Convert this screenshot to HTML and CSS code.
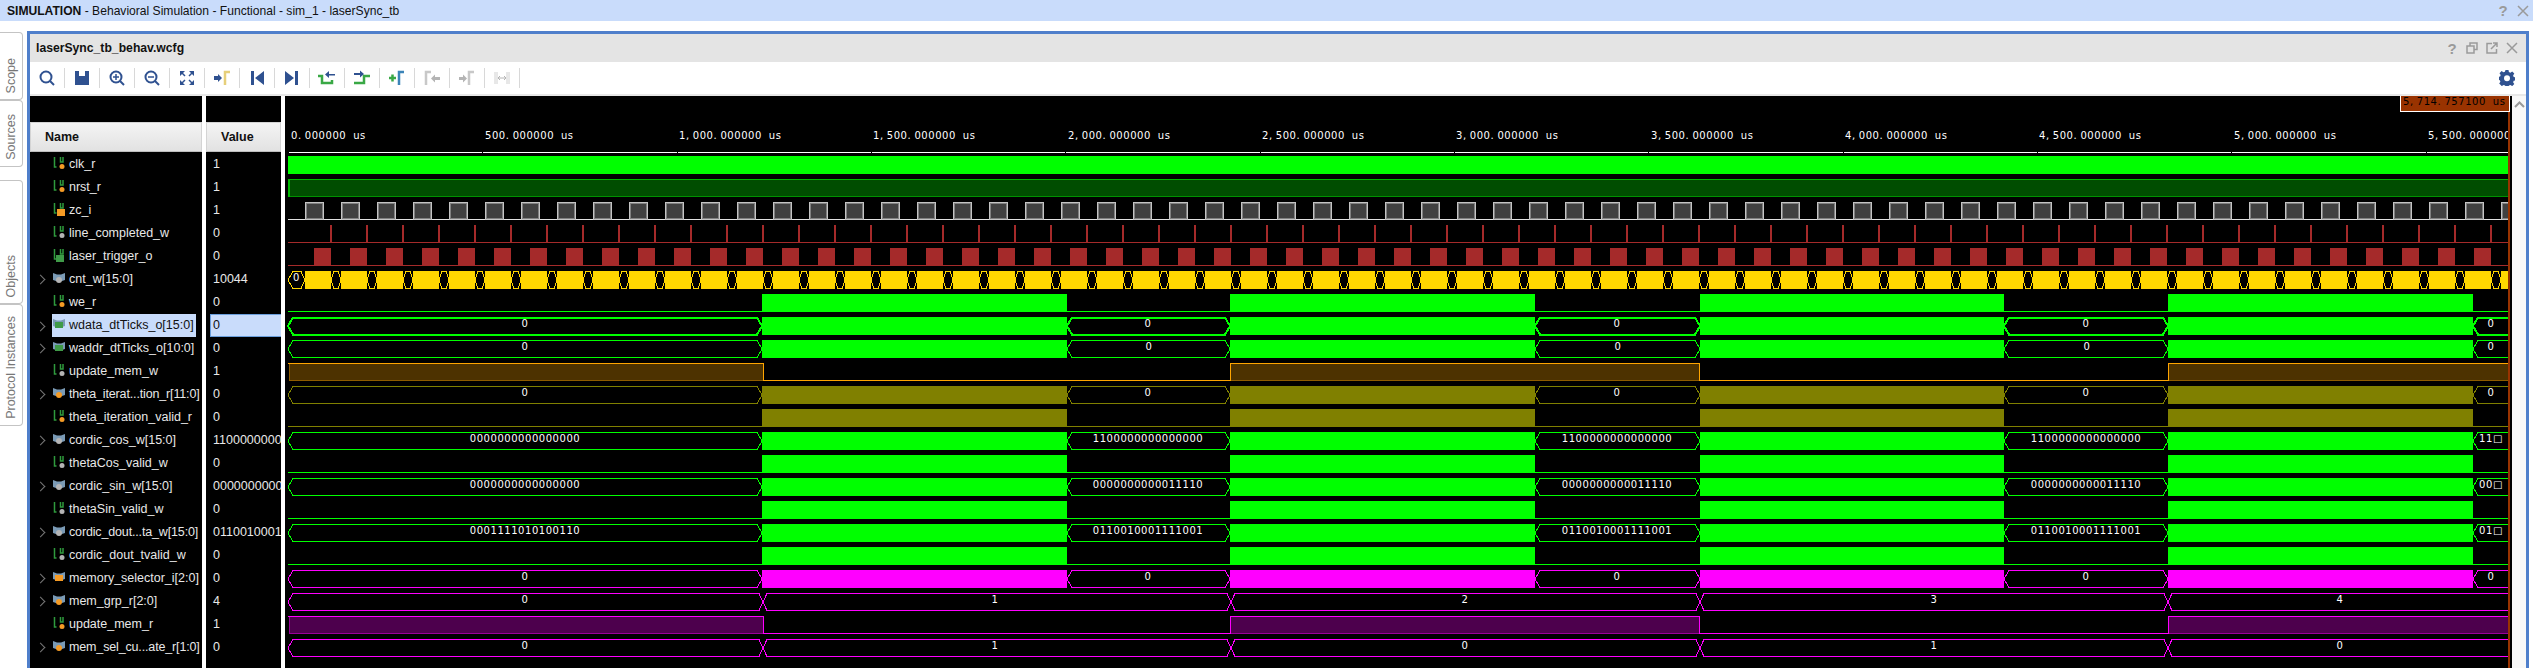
FILE: index.html
```html
<!DOCTYPE html>
<html lang="en">
<head>
<meta charset="utf-8">
<title>SIMULATION - laserSync_tb</title>
<link rel="stylesheet" href="styles.css">
</head>
<body>
<svg class="defs" width="0" height="0">
  <defs>
    <symbol id="s-line" viewBox="0 0 14 16"><path class="sl" d="M2.5 1v10h2M8.5 1v5h2.5V1"/></symbol>
    <symbol id="s-bus" viewBox="0 0 14 16"><path class="sb" d="M1 2l4 1.5h4L13 2v7l-3 1H4l-3-1z"/></symbol>
  </defs>
</svg>

<header class="titlebar">
  <span class="title"><b>SIMULATION</b> - Behavioral Simulation - Functional - sim_1 - laserSync_tb</span>
  <span class="top-controls">
    <span class="q">?</span>
    <svg class="ctl" width="12" height="12" viewBox="0 0 12 12"><path d="M1 1l10 10M11 1L1 11"/></svg>
  </span>
</header>

<div class="workspace">
  <nav class="sidetabs">
    <div class="tab tab-scope"><span>Scope</span></div>
    <div class="tab tab-sources"><span>Sources</span></div>
    <div class="tab tab-objects"><span>Objects</span></div>
    <div class="tab tab-proto"><span>Protocol Instances</span></div>
  </nav>

  <main class="window">
    <div class="win-head">
      <span class="win-title">laserSync_tb_behav.wcfg</span>
      <span class="win-controls">
        <span class="q">?</span>
        <svg class="ctl" width="12" height="12" viewBox="0 0 12 12"><path d="M4 3.5V1h7v6.5H8M1 4h7v7H1z"/></svg>
        <svg class="ctl" width="12" height="12" viewBox="0 0 12 12"><path d="M6 1.500H1V11h9.500V7"/><path d="M5 7l6-6M7 1h4v4"/></svg>
        <svg class="ctl" width="12" height="12" viewBox="0 0 12 12"><path d="M1 1l10 10M11 1L1 11"/></svg>
      </span>
    </div>

    <div class="toolbar">
      <span class="tool"><svg viewBox="0 0 20 20"><circle class="i-s" cx="9" cy="9" r="5.500"/><path class="i-s" d="M13 13l4 4"/></svg></span>
      <span class="tool"><svg viewBox="0 0 20 20"><path class="i-f" fill-rule="evenodd" d="M3 3h14v14H3zM7 3v5h6V3z"/></svg></span>
      <span class="tool"><svg viewBox="0 0 20 20"><circle class="i-s" cx="9" cy="9" r="5.500"/><path class="i-s" d="M13 13l4 4"/><path class="i-t" d="M6 9h6M9 6v6"/></svg></span>
      <span class="tool"><svg viewBox="0 0 20 20"><circle class="i-s" cx="9" cy="9" r="5.500"/><path class="i-s" d="M13 13l4 4"/><path class="i-t" d="M6 9h6"/></svg></span>
      <span class="tool"><svg viewBox="0 0 20 20"><path class="i-f" d="M3 3h5L3 8zM17 3v5l-5-5zM3 17v-5l5 5zM17 17h-5l5-5z"/><path class="i-t" d="M4 4l4 4M16 4l-4 4M4 16l4-4M16 16l-4-4"/></svg></span>
      <span class="tool"><svg viewBox="0 0 20 20"><path class="i-f" d="M2 8h4V6l4 4-4 4v-2H2z"/><path class="i-y" d="M13 17V4h5"/></svg></span>
      <span class="tool"><svg viewBox="0 0 20 20"><path class="i-f" d="M4 3h3v14H4zM17 3v14L8 10z"/></svg></span>
      <span class="tool"><svg viewBox="0 0 20 20"><path class="i-f" d="M16 3h-3v14h3zM3 3v14l9-7z"/></svg></span>
      <span class="tool"><svg viewBox="0 0 20 20"><path class="i-g" d="M1 8h4v7h10v-3"/><path class="i-f" d="M18 6h-6V3L8 6.500l4 3.500V7.500h6z"/></svg></span>
      <span class="tool"><svg viewBox="0 0 20 20"><path class="i-g" d="M2 15h10V8h6"/><path class="i-f" d="M2 5h6V2.500l4 3.500-4 3.500V7H2z"/></svg></span>
      <span class="tool"><svg viewBox="0 0 20 20"><path class="i-g" d="M2 10h7M5.500 6.500v7"/><path class="i-b" d="M12 17V4h5"/></svg></span>
      <span class="tool"><svg viewBox="0 0 20 20"><path class="i-m" d="M4 17V4h5"/><path class="i-n" d="M18 9h-5V6.500L9 10.500l4 4V12h5z"/></svg></span>
      <span class="tool"><svg viewBox="0 0 20 20"><path class="i-n" d="M2 9h4V6.500l4 4-4 4V12H2z"/><path class="i-m" d="M12 17V4h5"/></svg></span>
      <span class="tool"><svg viewBox="0 0 20 20"><path class="i-m2" d="M3 4v12M17 4v12M5 4v12M15 4v12"/><path class="i-th" d="M6 10h8M6 10l2-2M6 10l2 2M14 10l-2-2M14 10l-2 2"/></svg></span>
      <span class="gear"><svg width="16" height="16" viewBox="0 0 16 16"><path class="i-gear" fill-rule="evenodd" d="M6.500 0h3l.4 2.100 1.500.6 1.800-1.200 2.100 2.100-1.200 1.800.6 1.500 2.100.4v3l-2.100.4-.6 1.500 1.200 1.800-2.100 2.100-1.800-1.200-1.500.6-.4 2.100h-3l-.4-2.100-1.500-.6-1.800 1.200L.2 13.600l1.200-1.800-.6-1.500L-1 9.900v-3l2.100-.4.6-1.500L.5 3.200 2.600 1.100l1.800 1.200 1.500-.6zM8 5.200a3 3 0 1 0 0 6 3 3 0 0 0 0-6z"/></svg></span>
    </div>

    <div class="viewer">
      <section class="col col-names">
        <div class="col-spacer"></div>
        <div class="col-head">Name</div>
        <ul class="rows">
          <li class="row"><i class="chev"></i><svg class="sig"><use href="#s-line"/><circle class="dot reg" cx="10" cy="10.500" r="2.500"/></svg>clk_r</li>
          <li class="row"><i class="chev"></i><svg class="sig"><use href="#s-line"/><circle class="dot reg" cx="10" cy="10.500" r="2.500"/></svg>nrst_r</li>
          <li class="row"><i class="chev"></i><svg class="sig"><use href="#s-line"/><rect class="dot reg" x="5" y="7" width="8" height="7"/></svg>zc_i</li>
          <li class="row"><i class="chev"></i><svg class="sig"><use href="#s-line"/><circle class="dot wire" cx="10" cy="10.500" r="2.500"/></svg>line_completed_w</li>
          <li class="row"><i class="chev"></i><svg class="sig"><use href="#s-line"/><rect class="dot out" x="4" y="7" width="8" height="7"/></svg>laser_trigger_o</li>
          <li class="row"><i class="chev on"></i><svg class="sig"><use href="#s-bus"/><circle class="dot wire" cx="7" cy="9" r="3"/></svg>cnt_w[15:0]</li>
          <li class="row"><i class="chev"></i><svg class="sig"><use href="#s-line"/><circle class="dot reg" cx="10" cy="10.500" r="2.500"/></svg>we_r</li>
          <li class="row selected"><i class="chev on"></i><span class="sel-label"><svg class="sig"><use href="#s-bus"/><rect class="dot out" x="3" y="5" width="8" height="6"/></svg>wdata_dtTicks_o[15:0]</span></li>
          <li class="row"><i class="chev on"></i><svg class="sig"><use href="#s-bus"/><rect class="dot out" x="3" y="5" width="8" height="6"/></svg>waddr_dtTicks_o[10:0]</li>
          <li class="row"><i class="chev"></i><svg class="sig"><use href="#s-line"/><circle class="dot wire" cx="10" cy="10.500" r="2.500"/></svg>update_mem_w</li>
          <li class="row tight"><i class="chev on"></i><svg class="sig"><use href="#s-bus"/><circle class="dot reg" cx="7" cy="9" r="3"/></svg>theta_iterat...tion_r[11:0]</li>
          <li class="row"><i class="chev"></i><svg class="sig"><use href="#s-line"/><circle class="dot reg" cx="10" cy="10.500" r="2.500"/></svg>theta_iteration_valid_r</li>
          <li class="row"><i class="chev on"></i><svg class="sig"><use href="#s-bus"/><circle class="dot wire" cx="7" cy="9" r="3"/></svg>cordic_cos_w[15:0]</li>
          <li class="row"><i class="chev"></i><svg class="sig"><use href="#s-line"/><circle class="dot wire" cx="10" cy="10.500" r="2.500"/></svg>thetaCos_valid_w</li>
          <li class="row"><i class="chev on"></i><svg class="sig"><use href="#s-bus"/><circle class="dot wire" cx="7" cy="9" r="3"/></svg>cordic_sin_w[15:0]</li>
          <li class="row"><i class="chev"></i><svg class="sig"><use href="#s-line"/><circle class="dot wire" cx="10" cy="10.500" r="2.500"/></svg>thetaSin_valid_w</li>
          <li class="row tight"><i class="chev on"></i><svg class="sig"><use href="#s-bus"/><circle class="dot wire" cx="7" cy="9" r="3"/></svg>cordic_dout...ta_w[15:0]</li>
          <li class="row"><i class="chev"></i><svg class="sig"><use href="#s-line"/><circle class="dot wire" cx="10" cy="10.500" r="2.500"/></svg>cordic_dout_tvalid_w</li>
          <li class="row"><i class="chev on"></i><svg class="sig"><use href="#s-bus"/><rect class="dot reg" x="3" y="5" width="8" height="6"/></svg>memory_selector_i[2:0]</li>
          <li class="row"><i class="chev on"></i><svg class="sig"><use href="#s-bus"/><circle class="dot reg" cx="7" cy="9" r="3"/></svg>mem_grp_r[2:0]</li>
          <li class="row"><i class="chev"></i><svg class="sig"><use href="#s-line"/><circle class="dot reg" cx="10" cy="10.500" r="2.500"/></svg>update_mem_r</li>
          <li class="row tight"><i class="chev on"></i><svg class="sig"><use href="#s-bus"/><circle class="dot reg" cx="7" cy="9" r="3"/></svg>mem_sel_cu...ate_r[1:0]</li>
        </ul>
      </section>

      <section class="col col-values">
        <div class="col-spacer"></div>
        <div class="col-head">Value</div>
        <ul class="rows">
          <li class="val">1</li><li class="val">1</li><li class="val">1</li><li class="val">0</li><li class="val">0</li>
          <li class="val">10044</li><li class="val">0</li><li class="val val-sel">0</li><li class="val">0</li><li class="val">1</li>
          <li class="val">0</li><li class="val">0</li><li class="val">1100000000000000</li><li class="val">0</li>
          <li class="val">0000000000011110</li><li class="val">0</li><li class="val">0110010001111001</li><li class="val">0</li>
          <li class="val">0</li><li class="val">4</li><li class="val">1</li><li class="val">0</li>
        </ul>
      </section>

      <section class="wave-panel">
        <svg class="waves" width="2227" height="572" viewBox="285 96 2227 572">
          <defs>
            <g id="t1">
              <rect class="zc-outer" x="305.500" y="202.500" width="18" height="17"/>
              <rect class="zc-inner" x="306.500" y="203.500" width="16" height="15"/>
              <rect class="zc-low" x="324" y="219" width="17" height="1"/>
              <rect class="red" x="330" y="225" width="2" height="18"/>
              <rect class="red" x="314" y="248" width="17" height="18"/>
              <rect class="yel" x="305" y="271" width="26" height="18"/>
              <path class="yel-line" d="M331 280L334 271.500H338L341 280L338 288.500H334Z"/>
            </g>
            <g id="t2"><use href="#t1"/><use href="#t1" x="36"/></g>
            <g id="t4"><use href="#t2"/><use href="#t2" x="72"/></g>
            <g id="t8"><use href="#t4"/><use href="#t4" x="144"/></g>
            <g id="t16"><use href="#t8"/><use href="#t8" x="288"/></g>
            <g id="t32"><use href="#t16"/><use href="#t16" x="576"/></g>
            <g id="t64"><use href="#t32"/><use href="#t32" x="1152"/></g>
            <g id="pulses">
              <rect x="762" width="305" height="18"/><rect x="1230" width="305" height="18"/>
              <rect x="1700" width="304" height="18"/><rect x="2168" width="305" height="18"/>
            </g>
            <g id="gaps">
              <path d="M288 9L293 .5H757L762 9L757 17.500H293Z"/>
              <path d="M1067 9L1072 .5H1225L1230 9L1225 17.500H1072Z"/>
              <path d="M1535 9L1540 .5H1695L1700 9L1695 17.500H1540Z"/>
              <path d="M2004 9L2009 .5H2163L2168 9L2163 17.500H2009Z"/>
              <path d="M2520 .5H2478L2473 9L2478 17.500H2520"/>
            </g>
            <path id="xover" d="M288 9L293 .5H759L767 17.500H1227L1235 .5H1696L1704 17.500H2164L2172 .5H2520M288 9L293 17.500H759L767 .5H1227L1235 17.500H1696L1704 .5H2164L2172 17.500H2520"/>
            <g id="lowpulses">
              <rect class="low" x="288" y="17" width="2230" height="1"/>
              <use href="#pulses"/>
            </g>
          </defs>

          <g class="ruler-text">
            <text x="291" y="139">0<tspan class="p">.</tspan>000000<tspan class="p"> </tspan>us</text>
            <text x="485" y="139">500<tspan class="p">.</tspan>000000<tspan class="p"> </tspan>us</text>
            <text x="679" y="139">1<tspan class="p">,</tspan>000<tspan class="p">.</tspan>000000<tspan class="p"> </tspan>us</text>
            <text x="873" y="139">1<tspan class="p">,</tspan>500<tspan class="p">.</tspan>000000<tspan class="p"> </tspan>us</text>
            <text x="1068" y="139">2<tspan class="p">,</tspan>000<tspan class="p">.</tspan>000000<tspan class="p"> </tspan>us</text>
            <text x="1262" y="139">2<tspan class="p">,</tspan>500<tspan class="p">.</tspan>000000<tspan class="p"> </tspan>us</text>
            <text x="1456" y="139">3<tspan class="p">,</tspan>000<tspan class="p">.</tspan>000000<tspan class="p"> </tspan>us</text>
            <text x="1651" y="139">3<tspan class="p">,</tspan>500<tspan class="p">.</tspan>000000<tspan class="p"> </tspan>us</text>
            <text x="1845" y="139">4<tspan class="p">,</tspan>000<tspan class="p">.</tspan>000000<tspan class="p"> </tspan>us</text>
            <text x="2039" y="139">4<tspan class="p">,</tspan>500<tspan class="p">.</tspan>000000<tspan class="p"> </tspan>us</text>
            <text x="2234" y="139">5<tspan class="p">,</tspan>000<tspan class="p">.</tspan>000000<tspan class="p"> </tspan>us</text>
            <text x="2428" y="139">5<tspan class="p">,</tspan>500<tspan class="p">.</tspan>000000<tspan class="p"> </tspan>us</text>
          </g>
          <rect class="ruler-line" x="289" y="152" width="2219" height="1"/>
          <path class="ruler-nicks" d="M482 152.500h1M677 152.500h1M871 152.500h1M1065 152.500h1M1260 152.500h1M1454 152.500h1M1648 152.500h1M1843 152.500h1M2037 152.500h1M2231 152.500h1M2426 152.500h1"/>

          <rect class="bar-green" x="288" y="156" width="2220" height="18"/>

          <g transform="translate(0 179)">
            <rect class="nrst-fill" x="288" y="0" width="2220" height="18"/>
            <rect class="nrst-bot" x="288" y="17" width="2220" height="1"/>
            <path class="nrst-top" d="M288 .5H2508M288.500 0V18M289.500 0V18"/>
          </g>

          <rect class="zc-low" x="288" y="219" width="17" height="1"/>
          <rect class="red" x="288" y="242" width="2220" height="1"/>
          <rect class="red" x="288" y="265" width="2220" height="1"/>
          <path class="yel-line" d="M288 280L293 271.500H301L305 280L301 288.500H293Z"/>
          <text class="bus-text" x="296.500" y="281">0</text>
          <use href="#t64"/>

          <g class="c-green" transform="translate(0 294)"><use href="#lowpulses"/></g>

          <g class="c-green thick" transform="translate(0 317)">
            <use href="#gaps"/><use href="#pulses"/>
            <text class="bus-text" x="525" y="10">0</text><text class="bus-text" x="1148" y="10">0</text>
            <text class="bus-text" x="1617" y="10">0</text><text class="bus-text" x="2086" y="10">0</text>
            <text class="bus-text" x="2491" y="10">0</text>
          </g>
          <g class="c-green" transform="translate(0 340)">
            <use href="#gaps"/><use href="#pulses"/>
            <text class="bus-text" x="525" y="10">0</text><text class="bus-text" x="1149" y="10">0</text>
            <text class="bus-text" x="1618" y="10">0</text><text class="bus-text" x="2087" y="10">0</text>
            <text class="bus-text" x="2491" y="10">0</text>
          </g>

          <g transform="translate(0 363)">
            <path class="o-fill" d="M289 1H763V17H289zM1231 1H1700V17H1231zM2168 1H2508V17H2168z"/>
            <path class="o-dark" d="M289.500 1V17.500H763M1231 17.500H1700M2169 17.500H2508"/>
            <path class="o-line" d="M288 .5H763.500V17.500H1230.500V.5H1699.500V17.500H2168.500V.5H2508"/>
          </g>

          <g class="c-olive" transform="translate(0 386)">
            <use href="#gaps"/><use href="#pulses"/>
            <text class="bus-text" x="525" y="10">0</text><text class="bus-text" x="1148" y="10">0</text>
            <text class="bus-text" x="1617" y="10">0</text><text class="bus-text" x="2086" y="10">0</text>
            <text class="bus-text" x="2491" y="10">0</text>
          </g>
          <g class="c-olive" transform="translate(0 409)"><use href="#lowpulses"/></g>

          <g class="c-green" transform="translate(0 432)">
            <use href="#gaps"/><use href="#pulses"/>
            <text class="bus-text" x="525" y="10">0000000000000000</text><text class="bus-text" x="1148" y="10">1100000000000000</text>
            <text class="bus-text" x="1617" y="10">1100000000000000</text><text class="bus-text" x="2086" y="10">1100000000000000</text>
            <text class="bus-text" x="2491" y="10">11□</text>
          </g>
          <g class="c-green" transform="translate(0 455)"><use href="#lowpulses"/></g>
          <g class="c-green" transform="translate(0 478)">
            <use href="#gaps"/><use href="#pulses"/>
            <text class="bus-text" x="525" y="10">0000000000000000</text><text class="bus-text" x="1148" y="10">0000000000011110</text>
            <text class="bus-text" x="1617" y="10">0000000000011110</text><text class="bus-text" x="2086" y="10">0000000000011110</text>
            <text class="bus-text" x="2491" y="10">00□</text>
          </g>
          <g class="c-green" transform="translate(0 501)"><use href="#lowpulses"/></g>
          <g class="c-green" transform="translate(0 524)">
            <use href="#gaps"/><use href="#pulses"/>
            <text class="bus-text" x="525" y="10">0001111010100110</text><text class="bus-text" x="1148" y="10">0110010001111001</text>
            <text class="bus-text" x="1617" y="10">0110010001111001</text><text class="bus-text" x="2086" y="10">0110010001111001</text>
            <text class="bus-text" x="2491" y="10">01□</text>
          </g>
          <g class="c-green" transform="translate(0 547)"><use href="#lowpulses"/></g>

          <g class="c-magenta" transform="translate(0 570)">
            <use href="#gaps"/><use href="#pulses"/>
            <text class="bus-text" x="525" y="10">0</text><text class="bus-text" x="1148" y="10">0</text>
            <text class="bus-text" x="1617" y="10">0</text><text class="bus-text" x="2086" y="10">0</text>
            <text class="bus-text" x="2491" y="10">0</text>
          </g>
          <g class="c-magenta" transform="translate(0 593)">
            <use href="#xover"/>
            <text class="bus-text" x="525" y="10">0</text><text class="bus-text" x="995" y="10">1</text>
            <text class="bus-text" x="1465" y="10">2</text><text class="bus-text" x="1934" y="10">3</text>
            <text class="bus-text" x="2340" y="10">4</text>
          </g>
          <g transform="translate(0 616)">
            <path class="m-fill" d="M289 1H763V17H289zM1231 1H1700V17H1231zM2168 1H2508V17H2168z"/>
            <path class="m-dark" d="M289.500 1V17.500H763M1231 17.500H1700M2169 17.500H2508"/>
            <path class="m-line" d="M288 .5H763.500V17.500H1230.500V.5H1699.500V17.500H2168.500V.5H2508"/>
          </g>
          <g class="c-magenta" transform="translate(0 639)">
            <use href="#xover"/>
            <text class="bus-text" x="525" y="10">0</text><text class="bus-text" x="995" y="10">1</text>
            <text class="bus-text" x="1465" y="10">0</text><text class="bus-text" x="1934" y="10">1</text>
            <text class="bus-text" x="2340" y="10">0</text>
          </g>

          <rect class="edge" x="2510" y="96" width="2" height="572"/>
          <rect class="cursor" x="2508" y="96" width="2" height="572"/>
        </svg>
        <div class="cursor-flag">5<span class="p">,</span>714<span class="p">.</span>757100<span class="p"> </span>us</div>
      </section>

      <aside class="vscroll"><svg width="11" height="7" viewBox="0 0 11 7"><path d="M1 6l4.500-4.500L10 6"/></svg></aside>
    </div>
  </main>
</div>
</body>
</html>
```

FILE: styles.css
```css
* { box-sizing: border-box; }
html, body { margin: 0; padding: 0; }
body {
  width: 2533px;
  height: 668px;
  overflow: hidden;
  background: #fff;
  font-family: "Liberation Sans", Arial, sans-serif;
  color: #111;
}
.defs { display: block; height: 0; }

.titlebar {
  height: 21px;
  background: #c9dcfb;
  display: flex;
  align-items: center;
  justify-content: space-between;
  padding: 0 4px 0 7px;
  font-size: 12.100px;
}
.top-controls, .win-controls { display: flex; align-items: center; gap: 8px; }
.q { color: #9a9a9a; font-weight: 700; font-size: 15px; line-height: 1; width: 12px; text-align: center; }
.ctl { fill: none; stroke: #9a9a9a; stroke-width: 1.500; }

.workspace { display: flex; height: 647px; padding-top: 10px; }

.sidetabs { width: 27px; flex: none; display: flex; flex-direction: column; padding-top: 1px; }
.tab {
  width: 23px;
  border: 1px solid #c4c4c4;
  border-left: 0;
  border-radius: 0 4px 4px 0;
  display: flex;
  justify-content: center;
  align-items: flex-end;
  padding-bottom: 6px;
  background: #fff;
}
.tab span {
  writing-mode: vertical-rl;
  transform: rotate(180deg);
  font-size: 12.500px;
  color: #777;
  line-height: 1;
}
.tab-scope { height: 68px; }
.tab-sources { height: 67px; }
.tab-objects { height: 124px; margin-top: 13px; }
.tab-proto { height: 122px; }

.window {
  width: 2502px;
  border: 3px solid #4f7fcb;
  border-bottom: 0;
  display: flex;
  flex-direction: column;
}
.win-head {
  height: 28px;
  background: #e4e4e4;
  display: flex;
  align-items: center;
  justify-content: space-between;
  padding: 0 8px 0 6px;
}
.win-title { font-size: 12.200px; font-weight: 700; }

.toolbar {
  height: 34px;
  background: #fff;
  border-bottom: 2px solid #e8e8e8;
  display: flex;
  align-items: center;
}
.tool {
  width: 35px;
  height: 20px;
  border-right: 1px solid #d8d8d8;
  display: flex;
  align-items: center;
  justify-content: center;
  padding-right: 1px;
}
.tool svg { width: 20px; height: 20px; }
.gear { margin-left: auto; margin-right: 11px; display: flex; }
.i-s { fill: none; stroke: #2f5190; stroke-width: 2; }
.i-t { fill: none; stroke: #2f5190; stroke-width: 1.500; }
.i-f { fill: #2f5190; }
.i-y { fill: none; stroke: #e6cf7a; stroke-width: 2.500; }
.i-g { fill: none; stroke: #39a845; stroke-width: 2.500; }
.i-b { fill: none; stroke: #3b84b8; stroke-width: 2.500; }
.i-m { fill: none; stroke: #c8c8c8; stroke-width: 2.500; }
.i-m2 { fill: none; stroke: #d0d0d0; stroke-width: 1; }
.i-n { fill: #b4b4b4; }
.i-th { fill: none; stroke: #b4b4b4; stroke-width: 1; }
.i-gear { fill: #2f5190; }

.viewer {
  flex: 1;
  display: flex;
  min-height: 0;
  background: #fff;
}
.col { background: #000; overflow: hidden; flex: none; }
.col-names { width: 172px; margin-right: 4px; }
.col-values { width: 75px; margin-right: 4px; }
.col-spacer { height: 26px; }
.col-head {
  height: 30px;
  margin-bottom: 1px;
  background: linear-gradient(#f4f4f4, #e2e2e2);
  border: 1px solid #d4d4d4;
  border-bottom-color: #bdbdbd;
  color: #111;
  font-weight: 700;
  font-size: 12.500px;
  line-height: 28px;
  padding-left: 14px;
}
.rows { list-style: none; margin: 0; padding: 0; }
.row {
  height: 23px;
  display: flex;
  align-items: center;
  padding-bottom: 1px;
  color: #e8e8e8;
  font-size: 12.500px;
  white-space: nowrap;
}
.tight { letter-spacing: -0.150px; }
.chev { width: 22px; height: 22px; flex: none; position: relative; }
.chev.on::after {
  content: "";
  position: absolute;
  left: 7px;
  top: 8px;
  width: 6px;
  height: 6px;
  border-top: 1.500px solid #777;
  border-right: 1.500px solid #777;
  transform: rotate(45deg);
}
.sig { width: 14px; height: 16px; flex: none; margin-right: 3px; }
.sl { fill: none; stroke: #2f9a3d; stroke-width: 1.500; }
.sb { fill: #7a9ab5; }
.dot.reg { fill: #f59b25; }
.dot.wire { fill: #b5b5b5; }
.dot.out { fill: #3f9a48; }
.selected { color: #111; padding-bottom: 0; }
.sel-label { background: #c9dcfb; height: 23px; display: flex; align-items: center; width: 144px; padding-bottom: 1px; }

.val {
  height: 23px;
  line-height: 22px;
  padding-left: 7px;
  color: #e8e8e8;
  font-size: 12.500px;
  white-space: nowrap;
}
.val-sel { background: #c9dcfb; color: #111; border: 1px solid #6b9fdc; border-right: 0; margin-left: 4px; padding-left: 2px; line-height: 20px; }

.wave-panel { width: 2227px; flex: none; position: relative; background: #000; overflow: hidden; }
.waves { display: block; shape-rendering: crispEdges; }
.cursor-flag {
  position: absolute;
  top: 0;
  right: 2px;
  width: 110px;
  height: 16px;
  background: #993300;
  border: 1px solid #fff;
  border-top: 0;
  padding-left: 2px;
  color: #000;
  font: 10px/12px "DejaVu Sans", sans-serif;
  letter-spacing: 0.540px;
  white-space: pre;
}
.cursor-flag .p { letter-spacing: 3.720px; }

.ruler-text text {
  fill: #fff;
  font: 10px "DejaVu Sans", sans-serif;
  letter-spacing: 0.540px;
}
.ruler-text .p { letter-spacing: 3.720px; }
.bus-text {
  fill: #fff;
  stroke: none;
  font: 10px "DejaVu Sans", sans-serif;
  letter-spacing: 0.540px;
  text-anchor: middle;
}
.ruler-line { fill: #fff; }
.ruler-nicks { stroke: #000; stroke-width: 1; fill: none; }
.bar-green { fill: #0f0; }
.nrst-fill { fill: #004d00; }
.nrst-top { fill: none; stroke: #00b800; stroke-width: 1; }
.nrst-bot { fill: #009000; }
.zc-outer { fill: #404040; stroke: #c4c4c4; stroke-width: 1; }
.zc-inner { fill: #404040; stroke: #808080; stroke-width: 1; }
.zc-low { fill: #e0e0e0; }
.red { fill: #a52a2a; }
.yel { fill: #ffd700; }
.yel-line { fill: #000; stroke: #ffd700; stroke-width: 1; }

.c-green { color: #0f0; }
.c-olive { color: #808000; }
.c-magenta { color: #f0f; }
.thick { stroke-width: 2; }
#pulses rect { fill: currentColor; stroke: none; }
#gaps path, #xover { fill: none; stroke: currentColor; }
.low { fill: currentColor; stroke: none; }

.o-fill { fill: #4d3200; }
.o-dark { fill: none; stroke: #8f5c00; stroke-width: 1; }
.o-line { fill: none; stroke: #ffa500; stroke-width: 1; }
.m-fill { fill: #4d004d; }
.m-dark { fill: none; stroke: #990099; stroke-width: 1; }
.m-line { fill: none; stroke: #f0f; stroke-width: 1; }

.edge { fill: #000; }
.cursor { fill: #993300; }

.vscroll {
  flex: 1;
  background: #f8f8f8;
  display: flex;
  justify-content: center;
  padding-top: 5px;
}
.vscroll svg { fill: none; stroke: #999; stroke-width: 2; }
```
